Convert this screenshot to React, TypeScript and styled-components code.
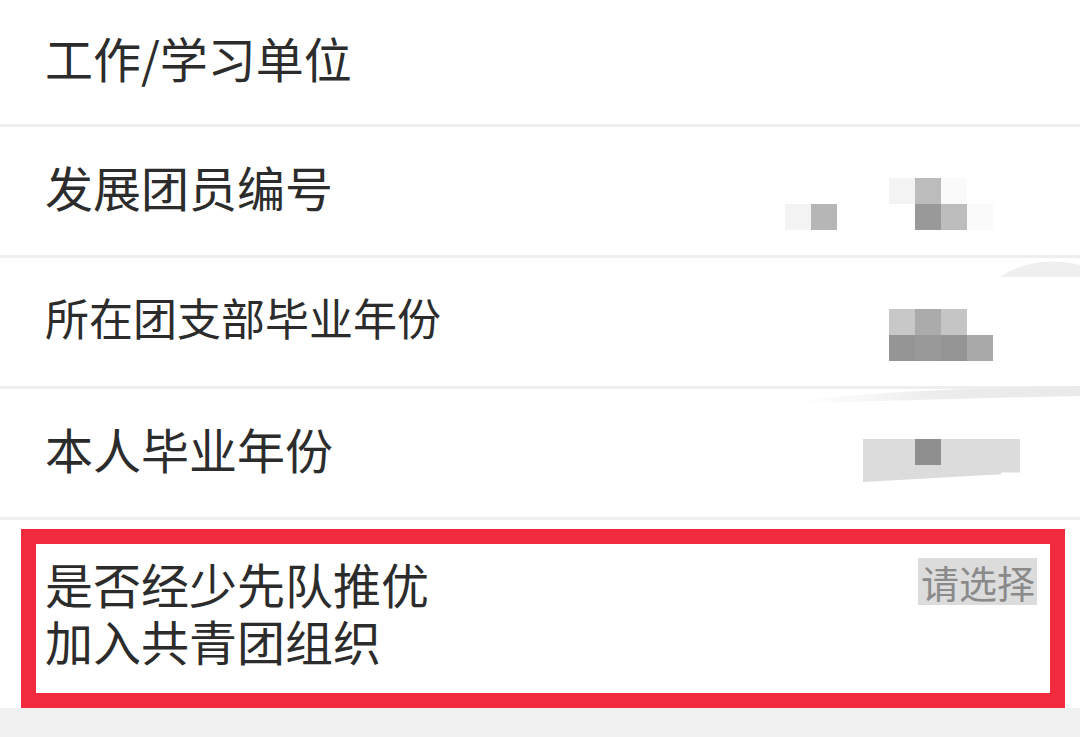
import React from 'react';
import styled, { createGlobalStyle } from 'styled-components';

type Cell = { col: number; row: number; color: string };

interface RowProps {
	$height: number;
}

interface LabelProps {
	$size?: number;
}

interface MosaicProps {
	$top: number;
	$right: number;
}

interface CellProps {
	$col: number;
	$row: number;
	$color: string;
}

const GlobalStyle = createGlobalStyle`
	html, body {
		margin: 0;
		padding: 0;
		background: #f1f1f1;
	}
	body {
		font-family: 'Noto Sans CJK SC', 'Noto Sans', sans-serif;
		color: #2c2c2c;
	}
`;

const fields: { label: string; size?: number; cells?: Cell[]; top?: number }[] = [
	{ label: '工作/学习单位' },
	{
		label: '发展团员编号',
		top: 51,
		cells: [
			{ col: 1, row: 2, color: '#f3f3f3' },
			{ col: 2, row: 2, color: '#b6b6b6' },
			{ col: 5, row: 1, color: '#f3f3f3' },
			{ col: 6, row: 1, color: '#bcbcbc' },
			{ col: 6, row: 2, color: '#999999' },
			{ col: 7, row: 2, color: '#bdbdbd' },
			{ col: 7, row: 1, color: '#fafafa' },
			{ col: 8, row: 2, color: '#fafafa' },
		],
	},
	{
		label: '所在团支部毕业年份',
		size: 44,
		top: 51,
		cells: [
			{ col: 5, row: 1, color: '#c8c8c8' },
			{ col: 6, row: 1, color: '#ababab' },
			{ col: 7, row: 1, color: '#c5c5c5' },
			{ col: 5, row: 2, color: '#959595' },
			{ col: 6, row: 2, color: '#999999' },
			{ col: 7, row: 2, color: '#959595' },
			{ col: 8, row: 2, color: '#a9a9a9' },
		],
	},
];

function App() {
	return (
		<>
			<GlobalStyle />
			<Page>
				{fields.map((field, i) => (
					<Row key={field.label} $height={i === 0 ? 127 : 131}>
						<Label $size={field.size}>{field.label}</Label>
						{field.cells && (
							<Mosaic $top={field.top ?? 0} $right={87}>
								{field.cells.map((c) => (
									<MosaicCell
										key={`${c.col}-${c.row}`}
										$col={c.col}
										$row={c.row}
										$color={c.color}
									/>
								))}
							</Mosaic>
						)}
						{i === 1 && (
							<Smudge width="80" height="22" viewBox="0 0 80 22" style={{ right: 0, bottom: -24 }}>
								<path d="M0 20 C 20 6, 50 0, 80 8 L80 20 Z" fill="#efefef" />
							</Smudge>
						)}
						{i === 2 && (
							<Smudge width="290" height="22" viewBox="0 0 290 22" style={{ right: 0, bottom: -20 }}>
								<defs>
									<linearGradient id="swoosh" x1="0" x2="1" y1="0" y2="0">
										<stop offset="0" stopColor="#f2f2f2" stopOpacity="0" />
										<stop offset="0.5" stopColor="#ececec" />
										<stop offset="1" stopColor="#eaeaea" />
									</linearGradient>
								</defs>
								<path d="M0 18 C 60 10, 160 4, 290 2 L290 12 C 180 14, 80 18, 0 19 Z" fill="url(#swoosh)" />
							</Smudge>
						)}
					</Row>
				))}
				<Row $height={131}>
					<Label>本人毕业年份</Label>
					<Smear>
						<DarkCell />
					</Smear>
				</Row>
				<HighlightRow>
					<Highlight>
						<MultiLabel>
							是否经少先队推优
							<br />
							加入共青团组织
						</MultiLabel>
						<Placeholder>请选择</Placeholder>
					</Highlight>
				</HighlightRow>
			</Page>
		</>
	);
}

const Page = styled.main`
	display: flex;
	flex-direction: column;
	background: #ffffff;
	width: 1080px;
`;

const Row = styled.div<RowProps>`
	position: relative;
	box-sizing: border-box;
	height: ${({ $height }) => $height}px;
	display: flex;
	align-items: center;
	padding-left: 45px;
	border-bottom: 3px solid #eeeeee;
`;

const Label = styled.span<LabelProps>`
	font-size: ${({ $size }) => $size ?? 48}px;
	line-height: 58px;
	padding-bottom: 10px;
	color: #2c2c2c;
	white-space: nowrap;
`;

const Mosaic = styled.div<MosaicProps>`
	align-self: flex-start;
	margin-left: auto;
	margin-top: ${({ $top }) => $top}px;
	margin-right: ${({ $right }) => $right}px;
	display: grid;
	grid-template-columns: repeat(8, 26px);
	grid-template-rows: repeat(2, 26px);
	filter: blur(0.6px);
`;

const MosaicCell = styled.div<CellProps>`
	grid-column: ${({ $col }) => $col};
	grid-row: ${({ $row }) => $row};
	background: ${({ $color }) => $color};
`;

const Smear = styled.div`
	align-self: flex-start;
	margin-left: auto;
	margin-top: 50px;
	margin-right: 60px;
	width: 157px;
	height: 43px;
	padding-left: 52px;
	box-sizing: border-box;
	background: #dcdcdc;
	clip-path: polygon(0 0, 100% 0, 100% 78%, 88% 78%, 88% 82%, 0 100%);
	filter: blur(0.5px);
`;

const DarkCell = styled.div`
	width: 26px;
	height: 26px;
	background: #8f8f8f;
`;

const Smudge = styled.svg`
	position: absolute;
	pointer-events: none;
	z-index: 1;
`;

const HighlightRow = styled.div`
	background: #ffffff;
	padding: 9px 15px 0 21px;
	height: 188px;
	box-sizing: border-box;
`;

const Highlight = styled.div`
	box-sizing: border-box;
	height: 179px;
	border: 15px solid #f22a3e;
	display: flex;
	justify-content: space-between;
	align-items: flex-start;
	padding: 11px 13px 0 9px;
`;

const MultiLabel = styled.div`
	font-size: 48px;
	line-height: 57px;
	color: #2c2c2c;
`;

const Placeholder = styled.span`
	margin-top: 3px;
	font-size: 38px;
	line-height: 47px;
	padding: 0 2px 0 3px;
	color: #8a8a8a;
	background: #dcdcdc;
`;

export default App;
